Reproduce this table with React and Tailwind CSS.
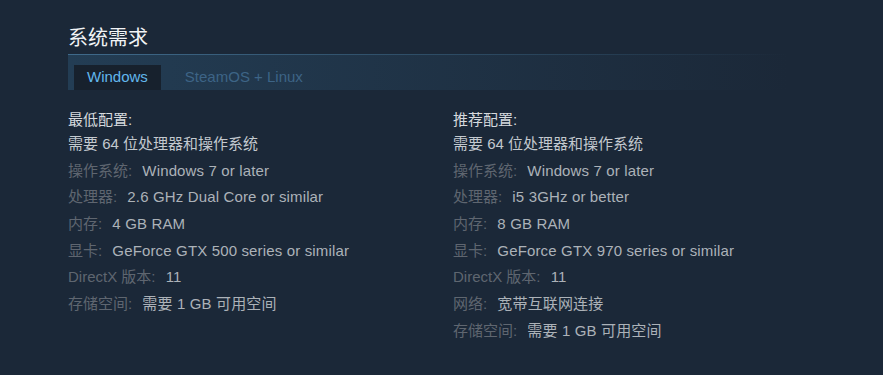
import React from 'react';

const minReq = [
  ['操作系统:', 'Windows 7 or later'],
  ['处理器:', '2.6 GHz Dual Core or similar'],
  ['内存:', '4 GB RAM'],
  ['显卡:', 'GeForce GTX 500 series or similar'],
  ['DirectX 版本:', '11'],
  ['存储空间:', '需要 1 GB 可用空间'],
];

const recReq = [
  ['操作系统:', 'Windows 7 or later'],
  ['处理器:', 'i5 3GHz or better'],
  ['内存:', '8 GB RAM'],
  ['显卡:', 'GeForce GTX 970 series or similar'],
  ['DirectX 版本:', '11'],
  ['网络:', '宽带互联网连接'],
  ['存储空间:', '需要 1 GB 可用空间'],
];

const ReqColumn = ({ title, items }) => (
  <div className="w-[385px]">
    <p className="mt-[20px] text-[15px] leading-[20px] text-[#d6dade]">{title}</p>
    <ul className="pt-px text-[15px] leading-[26.67px]">
      <li className="text-[#c3c9cf]">需要 64 位处理器和操作系统</li>
      {items.map(([label, value]) => (
        <li key={label} className="text-[#acb2b8]">
          <span className="pr-[6px] text-[#5f6670]">{label}</span>{' '}
          <span className="tracking-[0.15px]">{value}</span>
        </li>
      ))}
    </ul>
  </div>
);

const App = () => {
  return (
    <div
      className="min-h-screen bg-[#1b2838] pl-[68px] pt-[26px]"
      style={{ fontFamily: '"Liberation Sans", Arial, "Noto Sans CJK SC", sans-serif' }}
    >
      <h2 className="text-[20px] leading-[24px] text-[#f2f4f6]">系统需求</h2>

      {/* tabs */}
      <div className="mt-[4px] w-[720px] bg-gradient-to-r from-[#233d54] to-[#1b2838]">
        <div className="h-px bg-gradient-to-r from-[#3f6a8b] via-[#2e4d66] to-transparent" />
        <div className="flex items-end h-[35px] pl-[6px] text-[15px]">
          <div className="h-[25px] px-[13px] flex items-center bg-[#17212d] text-[#62b7ec]">Windows</div>
          <div className="h-[25px] ml-[11px] px-[13px] flex items-center text-[#3d6486]">SteamOS + Linux</div>
        </div>
      </div>

      <div className="flex">
        <ReqColumn title="最低配置:" items={minReq} />
        <ReqColumn title="推荐配置:" items={recReq} />
      </div>
    </div>
  );
};

export default App;
